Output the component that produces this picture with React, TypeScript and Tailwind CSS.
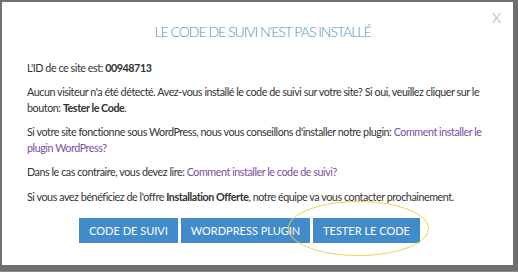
import React from 'react';

export default function App() {
  return (
    <div className="w-[518px] h-[272px] bg-[#8a8a8a]">
      <div
        className="relative h-[271px] w-[518px] bg-white border-l-2 border-t-2 border-r-[5px] border-b-[6px] border-[#6f6f6f] text-[#333] text-[10.75px] leading-[16px]"
        style={{ fontFamily: 'Lato, "Open Sans", sans-serif' }}
      >
        <span className="absolute right-[12px] top-[8px] text-[14px] text-[#c8c8c8]">X</span>
        <h2 className="pt-[20px] text-center text-[14px] leading-[20px] text-[#4f8fc8] uppercase tracking-[-1px] font-light pl-[10px]">
          Le code de suivi n'est pas installé
        </h2>
        <div className="pl-[25px] pr-[16px] pt-[18px] tracking-[-0.45px]">
          <p className="mb-[8px]">
            L'ID de ce site est: <b>00948713</b>
          </p>
          <p className="mb-[8px]">
            Aucun visiteur n'a été détecté. Avez-vous installé le code de suivi sur votre site? Si oui, veuillez cliquer sur le bouton: <b>Tester le Code</b>.
          </p>
          <p className="mb-[8px]">
            Si votre site fonctionne sous WordPress, nous vous conseillons d'installer notre plugin:{' '}
            <span className="text-[#7b4ea3]">Comment installer le plugin WordPress?</span>
          </p>
          <p className="mb-[9px]">
            Dans le cas contraire, vous devez lire: <span className="text-[#7b4ea3]">Comment installer le code de suivi?</span>
          </p>
          <p>
            Si vous avez bénéficiez de l'offre <b>Installation Offerte</b>, notre équipe va vous contacter prochainement.
          </p>
        </div>
        <div className="mt-[13px] flex gap-[3px] pl-[77px]">
          <button className="h-[25px] w-[99px] bg-[#428bca] text-white text-[11px]">CODE DE SUIVI</button>
          <button className="h-[25px] w-[129px] bg-[#428bca] text-white text-[11px]">WORDPRESS PLUGIN</button>
          <button className="h-[25px] w-[107px] bg-[#428bca] text-white text-[11px]">TESTER LE CODE</button>
        </div>
        <div className="absolute left-[286px] top-[199px] h-[55px] w-[141px] rounded-[50%] border border-[#ecd25a]" />
      </div>
    </div>
  );
}
